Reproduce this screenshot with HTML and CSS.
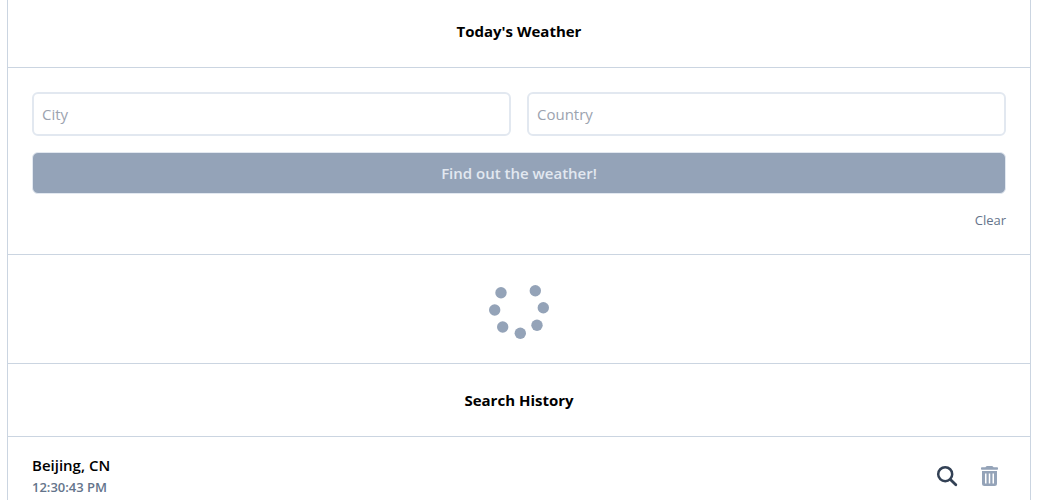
FILE: index.html
```html
<!DOCTYPE html>
<html lang="en">
<head>
<meta charset="utf-8">
<meta name="viewport" content="width=device-width, initial-scale=1">
<title>Today's Weather</title>
<link rel="stylesheet" href="styles.css">
</head>
<body>
<main class="panel">
  <header class="section section-title section-first"><h1 class="title">Today's Weather</h1></header>
  <form class="section form">
    <div class="fields">
      <input class="field" type="text" placeholder="City" aria-label="City">
      <input class="field" type="text" placeholder="Country" aria-label="Country">
    </div>
    <button class="submit" type="submit" disabled>Find out the weather!</button>
    <button class="clear" type="reset">Clear</button>
  </form>
  <div class="section loading" role="status" aria-label="Loading">
    <svg class="spinner" viewBox="0 0 60 60" aria-hidden="true">
      <circle cx="12" cy="13.7" r="5.7"/>
      <circle cx="5.7" cy="31" r="5.7"/>
      <circle cx="13.7" cy="48" r="5.7"/>
      <circle cx="31.3" cy="54.2" r="5.7"/>
      <circle cx="48" cy="46.2" r="5.7"/>
      <circle cx="54.3" cy="28.7" r="5.7"/>
      <circle cx="46.3" cy="11.8" r="5.7"/>
    </svg>
  </div>
  <div class="section section-title"><h2 class="title">Search History</h2></div>
  <ul class="history">
    <li class="entry">
      <div class="place">
        <p class="city">Beijing, CN</p>
        <p class="time">12:30:43 PM</p>
      </div>
      <div class="actions">
        <button class="action search" type="button" aria-label="Search again">
          <svg class="icon" viewBox="0 0 24 24" aria-hidden="true"><circle cx="10.2" cy="10.2" r="7" fill="none" stroke="currentColor" stroke-width="2.5"/><path d="M15.4 15.4l5.4 5.3" fill="none" stroke="currentColor" stroke-width="2.8" stroke-linecap="round"/></svg>
        </button>
        <button class="action remove" type="button" aria-label="Delete">
          <svg class="icon" viewBox="0 0 24 24" aria-hidden="true"><path fill="currentColor" fill-rule="evenodd" d="M9.900 2h5.200q.5 0 .8.4l.7.8h3.600a.8.8 0 0 1 .8.8v1a.8.8 0 0 1-.8.8H4.800a.8.8 0 0 1-.8-.8V4a.8.8 0 0 1 .8-.8h3.600l.7-.8q.3-.4.8-.4zM5 7h15v12.500a2.500 2.500 0 0 1-2.500 2.500h-10a2.500 2.500 0 0 1-2.500-2.500zM8 9.500v10h1.500v-10zM11.750 9.500v10h1.500v-10zM15.500 9.500v10h1.500v-10z"/></svg>
        </button>
      </div>
    </li>
  </ul>
</main>
</body>
</html>
```
FILE: styles.css
```css
* { box-sizing: border-box; }

body {
  margin: 0;
  padding: 0 10px 0 7px;
  background: #fff;
  color: #000;
  font: 15px/24px "Open Sans", "Noto Sans", sans-serif;
}

h1, h2, p, ul { margin: 0; padding: 0; }
ul { list-style: none; }
button, input { font: inherit; }

.panel {
  max-width: 1024px;
  margin: 0 auto;
  border: solid #cbd5e1;
  border-width: 0 1px;
}

.section {
  padding: 24px;
  border-bottom: 1px solid #cbd5e1;
}

.section-title { text-align: center; }
.section-first { padding-top: 19px; }

.title {
  font-size: 15px;
  font-weight: 700;
}

.form {
  display: flex;
  flex-direction: column;
  gap: 16px;
}

.fields {
  display: grid;
  grid-template-columns: 1fr 1fr;
  gap: 16px;
}

.field {
  width: 100%;
  min-width: 0;
  height: 44px;
  padding: 8px;
  border: 2px solid #e2e8f0;
  border-radius: 6px;
  background: #fff;
}

.field::placeholder { color: #9ca3af; opacity: 1; }

.submit {
  padding: 8px;
  border: 1px solid #e2e8f0;
  border-radius: 6px;
  background: #94a3b8;
  color: #e2e8f0;
  font-weight: 600;
}

.clear {
  align-self: flex-end;
  padding: 0;
  border: 0;
  background: none;
  color: #64748b;
  font-size: 13px;
  line-height: 20px;
}

.loading {
  display: flex;
  justify-content: center;
}

.spinner {
  width: 60px;
  height: 60px;
  fill: #94a3b8;
}

.entry {
  display: flex;
  align-items: flex-end;
  justify-content: space-between;
  padding: 16px 24px;
}

.city { font-weight: 600; }

.time {
  color: #64748b;
  font-size: 13px;
  font-weight: 600;
  line-height: 20px;
}

.actions { display: flex; gap: 8px; }

.action {
  display: flex;
  padding: 9px 5px;
  border: 0;
  background: none;
}

.icon { width: 24px; height: 24px; }
.search { color: #334155; }
.remove { color: #94a3b8; }
```
